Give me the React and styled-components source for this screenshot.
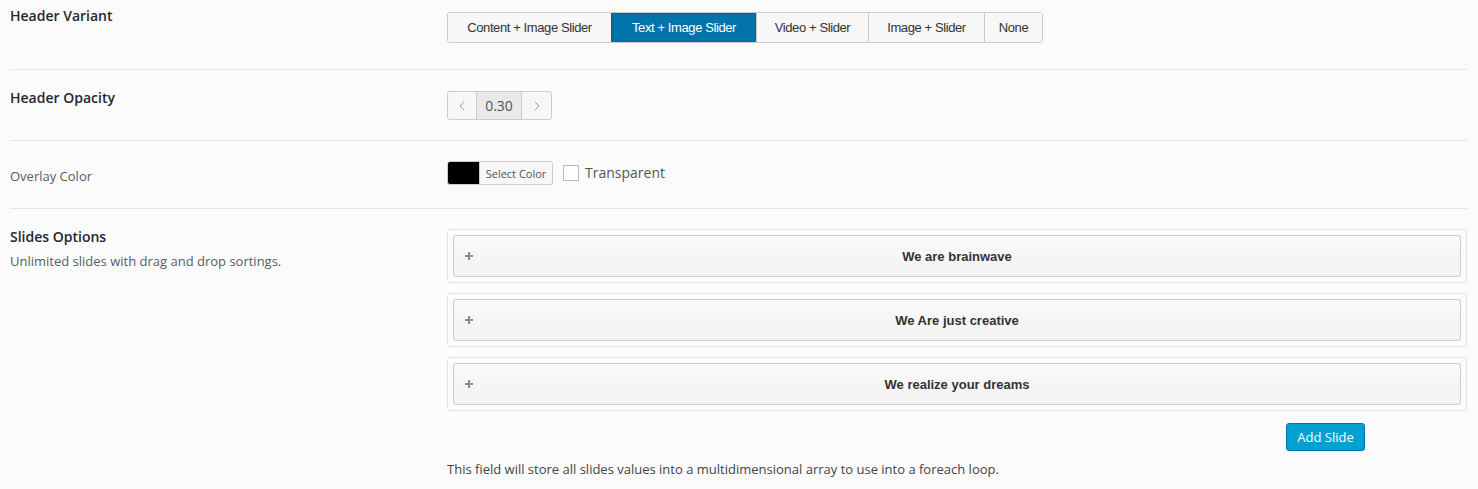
import React from "react";
import styled, { createGlobalStyle } from "styled-components";

const GlobalStyle = createGlobalStyle`
    html, body {
        margin: 0;
        padding: 0;
        background: #fbfbfb;
    }
    body {
        font-family: "Open Sans", "Liberation Sans", sans-serif;
        color: #444;
    }
`;

const Page = styled.div`
    padding: 0 11px 0 10px;
`;

const Row = styled.div`
    display: grid;
    grid-template-columns: 437px 1020px;
    padding: ${p => p.$top}px 0 ${p => p.$bottom}px;
    border-bottom: ${p => (p.$last ? "none" : "1px solid #e5e5e5")};
`;

const Label = styled.div`
    margin-top: ${p => p.$offset || 0}px;
`;

const Title = styled.div`
    font-size: 14px;
    line-height: 20px;
    font-weight: 600;
    color: #23282d;
`;

const SubTitle = styled.div`
    font-size: 13px;
    line-height: 20px;
    color: #555d66;
`;

const Description = styled.div`
    margin-top: 4px;
    font-size: 13px;
    line-height: 20px;
    color: #555d66;
`;

const Control = styled.div`
    display: flex;
    flex-direction: column;
    align-items: flex-start;
    margin-top: ${p => p.$offset || 0}px;
`;

const ButtonSet = styled.div`
    display: flex;
    height: 31px;
    border: 1px solid #cccccc;
    border-radius: 3px;
    box-sizing: border-box;
    overflow: hidden;
    background: #f7f7f7;
`;

const SetButton = styled.div`
    display: flex;
    align-items: center;
    justify-content: center;
    width: ${p => p.$w}px;
    box-sizing: border-box;
    font-family: "Liberation Sans", Arial, sans-serif;
    font-size: 13px;
    letter-spacing: -0.4px;
    color: ${p => (p.$active ? "#ffffff" : "#333333")};
    background: ${p => (p.$active ? "#0073aa" : "#f7f7f7")};
    border-left: 1px solid ${p => (p.$active ? "#006799" : "#cccccc")};
    box-shadow: ${p => (p.$active ? "inset 0 0 0 1px #006799" : "none")};
    &:first-child {
        border-left: none;
    }
`;

const Stepper = styled.div`
    display: flex;
    height: 29px;
    border: 1px solid #cccccc;
    border-radius: 3px;
    box-sizing: border-box;
    overflow: hidden;
    background: #f7f7f7;
`;

const StepArrow = styled.div`
    width: ${p => p.$w}px;
    display: flex;
    align-items: center;
    justify-content: center;
`;

const StepValue = styled.div`
    width: 46px;
    box-sizing: border-box;
    display: flex;
    align-items: center;
    justify-content: center;
    background: #e9e9e9;
    border-left: 1px solid #cccccc;
    border-right: 1px solid #cccccc;
    font-size: 14px;
    color: #555;
`;

const ColorLine = styled.div`
    display: flex;
    align-items: center;
    height: 24px;
`;

const ColorPicker = styled.div`
    display: flex;
    height: 24px;
    width: 106px;
    border: 1px solid #cccccc;
    border-radius: 3px;
    box-sizing: border-box;
    overflow: hidden;
    background: #f7f7f7;
`;

const Swatch = styled.div`
    width: 31px;
    background: ${p => p.$color};
`;

const PickerText = styled.div`
    flex: 1;
    display: flex;
    align-items: center;
    justify-content: center;
    border-left: 1px solid #cccccc;
    font-size: 11px;
    color: #555;
`;

const CheckLabel = styled.label`
    display: flex;
    align-items: center;
    margin-left: 10px;
    font-size: 14px;
    line-height: 20px;
    color: #555;
`;

const CheckBox = styled.span`
    width: 16px;
    height: 16px;
    box-sizing: border-box;
    border: 1px solid #b4b9be;
    background: #fff;
    margin-right: 6px;
`;

const SlideList = styled.div`
    align-self: stretch;
    display: flex;
    flex-direction: column;
    gap: 10px;
`;

const SlideOuter = styled.div`
    border: 1px solid #e2e2e2;
    border-radius: 3px;
    padding: 5px;
    background: #fbfbfb;
`;

const SlideHead = styled.div`
    position: relative;
    height: 42px;
    box-sizing: border-box;
    border: 1px solid #cccccc;
    border-radius: 3px;
    background: linear-gradient(#f9f9f9, #f3f3f3);
    display: flex;
    align-items: center;
    justify-content: center;
    font-family: "Liberation Sans", Arial, sans-serif;
    font-weight: bold;
    font-size: 13px;
    color: #333;
`;

const PlusIcon = styled.svg`
    position: absolute;
    left: 11px;
    top: 50%;
    margin-top: -4px;
`;

const AddRow = styled.div`
    align-self: stretch;
    display: flex;
    justify-content: flex-end;
    padding-right: 102px;
    margin-top: 12px;
`;

const AddButton = styled.button`
    width: 79px;
    height: 28px;
    border: 1px solid #0073aa;
    border-radius: 3px;
    background: #00a0d2;
    color: #fff;
    font-family: "Open Sans", sans-serif;
    font-size: 13px;
    padding: 0;
`;

const Note = styled.div`
    margin-top: 8px;
    font-size: 13px;
    line-height: 20px;
    color: #444;
`;

const Chevron = ({ dir }) => (
    <svg width="6" height="10" viewBox="0 0 6 10">
        <path d={dir === "left" ? "M5 1 L1 5 L5 9" : "M1 1 L5 5 L1 9"} fill="none" stroke="#999" strokeWidth="1" />
    </svg>
);

const variants = [
    ["Content + Image Slider", 163],
    ["Text + Image Slider", 145, true],
    ["Video + Slider", 112],
    ["Image + Slider", 116],
    ["None", 58]
];

const slides = ["We are brainwave", "We Are just creative", "We realize your dreams"];

export default function App() {
    return <Page>
        <GlobalStyle />
        <Row $top={6} $bottom={26}>
            <Label><Title>Header Variant</Title></Label>
            <Control $offset={6}>
                <ButtonSet>
                    {variants.map(([t, w, a]) => <SetButton key={t} $w={w} $active={a}>{t}</SetButton>)}
                </ButtonSet>
            </Control>
        </Row>
        <Row $top={18} $bottom={20}>
            <Label><Title>Header Opacity</Title></Label>
            <Control $offset={3}>
                <Stepper>
                    <StepArrow $w={28}><Chevron dir="left" /></StepArrow>
                    <StepValue>0.30</StepValue>
                    <StepArrow $w={29}><Chevron dir="right" /></StepArrow>
                </Stepper>
            </Control>
        </Row>
        <Row $top={20} $bottom={22}>
            <Label $offset={5}><SubTitle>Overlay Color</SubTitle></Label>
            <Control>
                <ColorLine>
                    <ColorPicker>
                        <Swatch $color="#000" />
                        <PickerText>Select Color</PickerText>
                    </ColorPicker>
                    <CheckLabel><CheckBox />Transparent</CheckLabel>
                </ColorLine>
            </Control>
        </Row>
        <Row $top={20} $bottom={0} $last>
            <Label $offset={-2}>
                <Title>Slides Options</Title>
                <Description>Unlimited slides with drag and drop sortings.</Description>
            </Label>
            <Control>
                <SlideList>
                    {slides.map(s => <SlideOuter key={s}>
                        <SlideHead>
                            <PlusIcon width="8" height="8" viewBox="0 0 8 8">
                                <path d="M4 0 V8 M0 4 H8" stroke="#8c8c8c" strokeWidth="2" />
                            </PlusIcon>
                            {s}
                        </SlideHead>
                    </SlideOuter>)}
                </SlideList>
                <AddRow><AddButton>Add Slide</AddButton></AddRow>
                <Note>This field will store all slides values into a multidimensional array to use into a foreach loop.</Note>
            </Control>
        </Row>
    </Page>;
}
